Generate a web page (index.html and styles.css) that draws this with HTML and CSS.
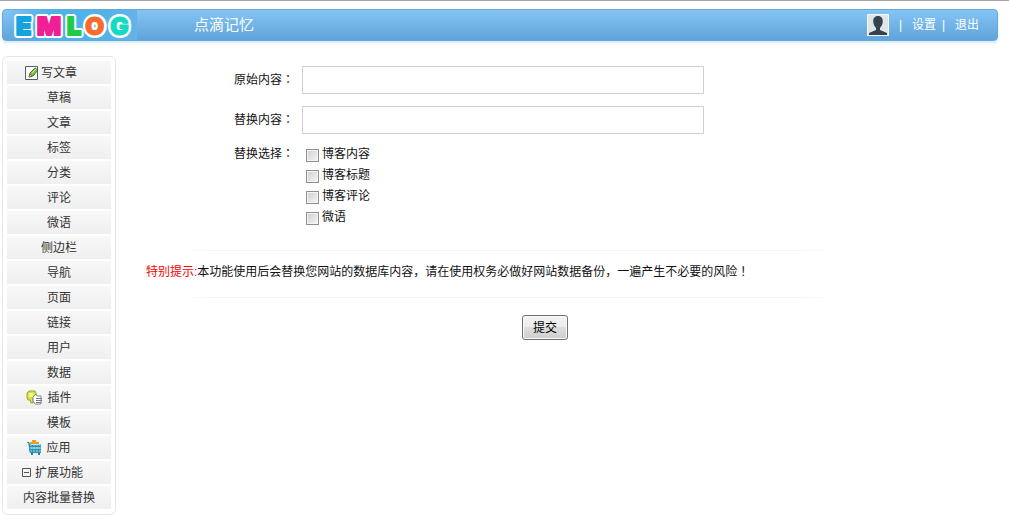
FILE: index.html
```html
<!DOCTYPE html>
<html lang="zh-CN">
<head>
<meta charset="utf-8">
<title>点滴记忆</title>
<link rel="stylesheet" href="styles.css">
</head>
<body>
<header class="topbar">
  <a class="logo" href="#" aria-label="EMLOG">
    <svg width="130" height="32" viewBox="0 0 130 32">
      <g class="logo-outline"><text x="9" y="26">E</text><text x="30" y="26">M</text><text x="60" y="26">L</text><text x="78" y="26">O</text><text x="103" y="26">G</text></g>
      <g class="logo-fill" aria-hidden="true"><text class="c-blue" x="9" y="26">E</text><text class="c-pink" x="30" y="26">M</text><text class="c-green" x="60" y="26">L</text><text class="c-orange" x="78" y="26">O</text><text class="c-teal" x="103" y="26">G</text></g>
    </svg>
  </a>
  <a class="site-name" href="#">点滴记忆</a>
  <nav class="account">
    <svg class="avatar" width="22" height="22" viewBox="0 0 22 22"><rect width="22" height="22" fill="#f4f6f7"/><rect x="1" y="1" width="20" height="20" fill="#dfe4e6"/><path d="M11 2C7.500 2 6 4.500 6.300 8c.2 3 1.400 4.500 2.700 6v2L2 19v2h18v-2l-7-3v-2c1.300-1.500 2.500-3 2.700-6C16 4.500 14.500 2 11 2z" fill="#36434f"/></svg>
    <span class="bar">|</span>
    <a href="#">设置</a>
    <span class="bar near">|</span>
    <a href="#">退出</a>
  </nav>
</header>
<div class="layout">
  <nav class="sidebar">
    <a class="item write" href="#"><svg width="14" height="16" viewBox="0 0 14 16"><path d="M.5 1.500h12v13H.5z" fill="#fff" stroke="#555b68"/><path d="M4 12l1-4 5-5 3 2-5 6z" fill="#7fc33b" stroke="#3d7822"/><path d="M4 12l1-3 2 2z" fill="#f3d68c" stroke="#554b2c" stroke-width=".6"/><path d="M7 8l4-4" stroke="#c7ec91"/></svg>写文章</a>
    <a class="item" href="#">草稿</a>
    <a class="item" href="#">文章</a>
    <a class="item" href="#">标签</a>
    <a class="item" href="#">分类</a>
    <a class="item" href="#">评论</a>
    <a class="item" href="#">微语</a>
    <a class="item" href="#">侧边栏</a>
    <a class="item" href="#">导航</a>
    <a class="item" href="#">页面</a>
    <a class="item" href="#">链接</a>
    <a class="item" href="#">用户</a>
    <a class="item" href="#">数据</a>
    <a class="item tool" href="#"><svg width="17" height="16" viewBox="0 0 17 16"><path d="M1 3l2-2h6l1 2v3L7 8v5H5l-1-3H2L1 8z" fill="#d8df45" stroke="#9aa52c"/><path d="M3 3h4v4H3z" fill="#f2f49b"/><path d="M7 7l3-3 1 2h4v8H9l-2-3z" fill="#fff" stroke="#858b90"/><path d="M10 8.500h6M10 10.500h6M10 12.500h5" stroke="#747b80"/></svg>插件</a>
    <a class="item" href="#">模板</a>
    <a class="item tool" href="#"><svg width="15" height="16" viewBox="0 0 15 16"><path d="M3 4V2h2V0h4v2h3v2z" fill="#f39a2d"/><path d="M1 3h2v1h11v8H3z" fill="#64bdd2"/><path d="M0 2.500h2l1 10h11M2 6.500h12M3 9.500h11M5.500 4v8M8.500 4v8M11.500 4v8" fill="none" stroke="#2b8eae"/><path d="M4 4.500h9M4 8h9" stroke="#b4e5ec"/><path d="M4 13h2v2H4zM11 13h2v2h-2z" fill="#327b98"/></svg>应用</a>
    <a class="item extend" href="#"><svg width="9" height="9" viewBox="0 0 9 9"><path d="M.5.5h8v8h-8zM2 4.500h5" fill="none" stroke="#555"/></svg>扩展功能</a>
    <a class="item" href="#">内容批量替换</a>
  </nav>
  <main class="content">
    <form>
      <div class="fields">
        <label class="caption" for="source">原始内容<span class="mark" lang="zh-TW">：</span></label>
        <input class="text" id="source" type="text">
        <label class="caption" for="target">替换内容<span class="mark" lang="zh-TW">：</span></label>
        <input class="text" id="target" type="text">
        <span class="caption top" id="scope">替换选择<span class="mark" lang="zh-TW">：</span></span>
        <div class="choices" role="group" aria-labelledby="scope">
          <label><input type="checkbox">博客内容</label>
          <label><input type="checkbox">博客标题</label>
          <label><input type="checkbox">博客评论</label>
          <label><input type="checkbox">微语</label>
        </div>
      </div>
      <p class="notice"><span class="warn">特别提示:</span>本功能使用后会替换您网站的数据库内容，请在使用权务必做好网站数据备份，一遍产生不必要的风险<span class="mark" lang="zh-TW">！</span></p>
      <div class="actions"><button type="submit">提交</button></div>
    </form>
  </main>
</div>
</body>
</html>
```
FILE: styles.css
```css
* { box-sizing: border-box; }
body {
  margin: 0;
  border-top: 1px solid #a3a3a8;
  background: #fff;
  color: #111;
  font: 12px/20px "Liberation Sans", "Noto Sans CJK SC", sans-serif;
}
a { color: inherit; text-decoration: none; }
.mark { font-family: "Noto Sans CJK TC", sans-serif; line-height: 1; }
.topbar {
  display: flex;
  align-items: center;
  height: 32px;
  margin: 8px 11px 0 2px;
  padding: 0 18px 0 4px;
  border: 1px solid #68a9da;
  border-radius: 4px;
  background: linear-gradient(#85c4f5, #60a4da);
  box-shadow: 0 2px 3px #d5e9f7;
  color: #fff;
}
.logo {
  display: block;
  height: 30px;
  background: linear-gradient(90deg, #62b4e900, #4db3e8 30%, #4db3e8 70%, #62b4e9);
}
.logo svg { display: block; margin-top: -1px; }
.logo text { font: 900 25px Inter, sans-serif; stroke-linejoin: round; }
.logo-outline { fill: #fff; stroke: #fff; stroke-width: 6px; }
.logo-fill { stroke-width: 2px; }
.c-blue { fill: #16a4df; stroke: #16a4df; }
.c-pink { fill: #f01f94; stroke: #f01f94; }
.c-green { fill: #20cb48; stroke: #20cb48; }
.c-orange { fill: #f76b2d; stroke: #f76b2d; stroke-width: 1px; }
.c-teal { fill: #14dac5; stroke: #14dac5; stroke-width: 1px; }
.site-name { margin-left: 57px; font-size: 15px; line-height: 30px; }
.account { display: flex; align-items: center; margin-left: auto; }
.account .bar { width: 23px; text-align: center; }
.account .near { width: 19px; padding-right: 4px; }
.layout { display: flex; align-items: flex-start; margin: 15px 11px 0 2px; }
.sidebar {
  flex: none;
  width: 114px;
  padding: 4px 4px 3px;
  border: 1px solid #e6e6e6;
  border-radius: 6px;
}
.item {
  display: flex;
  align-items: center;
  justify-content: center;
  height: 23px;
  margin-bottom: 2px;
  background: linear-gradient(#f8f8f8, #efefef);
  color: #333;
}
.write { gap: 2px; padding-right: 16px; }
.tool { gap: 4px; padding-right: 20px; }
.extend { gap: 4px; padding-right: 13px; }
.content { flex: 1; padding: 10px 0 0 30px; }
.fields {
  display: grid;
  grid-template-columns: 148px minmax(0, 402px);
  column-gap: 8px;
  row-gap: 12px;
  align-items: center;
}
.caption { text-align: right; }
.top { align-self: start; margin-top: -2px; }
.text {
  width: 100%;
  height: 28px;
  padding: 2px 6px;
  border: 1px solid #d0d0d0;
  background: #fff;
  font: inherit;
}
.choices { display: grid; margin-top: -3px; padding-left: 4px; }
.choices label { display: flex; align-items: center; gap: 3px; height: 21px; }
.choices input {
  appearance: none;
  width: 13px;
  height: 13px;
  margin: 3px 0 0;
  border: 1px solid #8e8f8f;
  background: linear-gradient(135deg, #cbcfd5, #f6f6f6);
  box-shadow: inset 0 0 0 1px #f4f4f4;
}
.choices input:checked { background: #4c89b8; }
.notice {
  max-width: 694px;
  margin: 23px 0 0;
  padding: 12px 0 16px;
  background:
    linear-gradient(90deg, transparent 4%, #f5f5f5 10%, #f5f5f5 94%, transparent) top / 100% 1px no-repeat,
    linear-gradient(90deg, transparent 4%, #f5f5f5 10%, #f5f5f5 94%, transparent) bottom / 100% 1px no-repeat;
}
.warn { color: #f00; }
.actions { max-width: 798px; margin-top: 17px; text-align: center; }
button {
  width: 46px;
  height: 25px;
  padding: 0;
  border: 1px solid #707070;
  border-radius: 3px;
  background: linear-gradient(#f3f3f3, #ebebeb 50%, #ddd 50%, #cfcfcf);
  box-shadow: inset 0 0 0 1px #fafafa;
  color: #000;
  font: inherit;
}
```
